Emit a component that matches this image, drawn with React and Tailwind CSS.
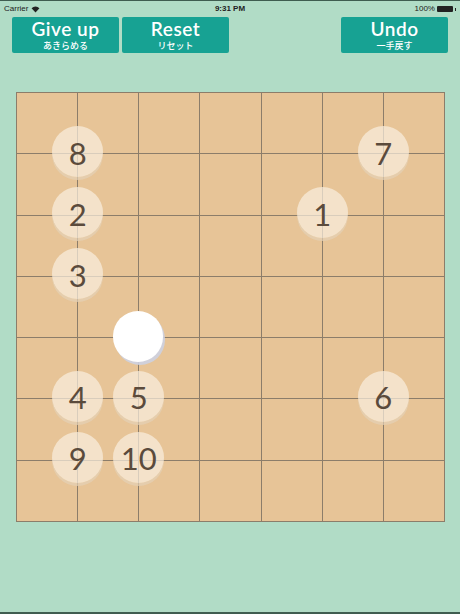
import { useMemo } from "react";

const CELL = 428 / 7;

const stones = [
  { n: 8, c: 1, r: 1 },
  { n: 7, c: 6, r: 1 },
  { n: 2, c: 1, r: 2 },
  { n: 1, c: 5, r: 2 },
  { n: 3, c: 1, r: 3 },
  { n: 4, c: 1, r: 5 },
  { n: 5, c: 2, r: 5 },
  { n: 6, c: 6, r: 5 },
  { n: 9, c: 1, r: 6 },
  { n: 10, c: 2, r: 6 },
];

function GameButton({ title, sub }) {
  return (
    <button className="w-[107px] h-[36px] bg-[#17a293] rounded-[2px] flex flex-col items-center justify-start pt-[2px] text-white">
      <span className="h-[21px] leading-[20px] text-[19px] font-[Lato,sans-serif] font-semibold tracking-[0.5px]">
        {title}
      </span>
      <span className="h-[11px] leading-[12px] text-[9px] font-['Noto_Sans_CJK_JP',sans-serif] font-medium">
        {sub}
      </span>
    </button>
  );
}

export default function App() {
  const cells = useMemo(() => Array.from({ length: 49 }, (_, i) => i), []);

  return (
    <div className="w-[460px] h-[614px] bg-[#b1dcc6] flex flex-col border-t border-[#3f5d50] border-b-2 border-b-[#3f5d50] overflow-hidden">
      {/* STATUS BAR */}
      <div className="h-[16px] px-[4px] flex items-center justify-between text-[8px] text-[#222] font-['Liberation_Sans',sans-serif]">
        <div className="flex items-center gap-[3px] w-[80px]">
          <span>Carrier</span>
          <svg width="9" height="7" viewBox="0 0 10 8">
            <path d="M5 7.5 L0.5 2.5 A6.5 6.5 0 0 1 9.5 2.5 Z" fill="#222" />
          </svg>
        </div>
        <span className="font-bold">9:31 PM</span>
        <div className="flex items-center justify-end gap-[2px] w-[80px]">
          <span>100%</span>
          <div className="w-[16px] h-[6px] bg-[#222] rounded-[1px]" />
          <div className="w-[1px] h-[3px] bg-[#222]" />
        </div>
      </div>

      {/* BUTTONS */}
      <div className="flex px-[12px] gap-[3px]">
        <GameButton title="Give up" sub="あきらめる" />
        <GameButton title="Reset" sub="リセット" />
        <div className="flex-1" />
        <GameButton title="Undo" sub="一手戻す" />
      </div>

      {/* BOARD */}
      <div className="ml-[16px] mt-[39px] relative w-[429px] h-[430px]">
        <div className="grid grid-cols-7 w-[429px] h-[430px] bg-[#e7c497] border-l border-t border-[#8c7d6a]">
          {cells.map((i) => (
            <div key={i} className="border-r border-b border-[#8c7d6a]" />
          ))}
        </div>

        {stones.map((s) => (
          <div
            key={s.n}
            className="absolute w-[51px] h-[51px] rounded-full bg-[#faf0df]/70 shadow-[0_3px_0_rgba(228,210,182,0.7)] flex items-center justify-center text-[#5b4b3c] text-[31px] font-[Lato,sans-serif] leading-none"
            style={{ left: s.c * CELL - 25, top: s.r * CELL - 27 }}
          >
            <span className="mt-[3px]">{s.n}</span>
          </div>
        ))}

        <div
          className="absolute w-[50px] h-[51px] rounded-full bg-white shadow-[2px_3px_0_rgba(205,210,225,0.9)]"
          style={{ left: 2 * CELL - 25, top: 4 * CELL - 26 }}
        />
      </div>
    </div>
  );
}
